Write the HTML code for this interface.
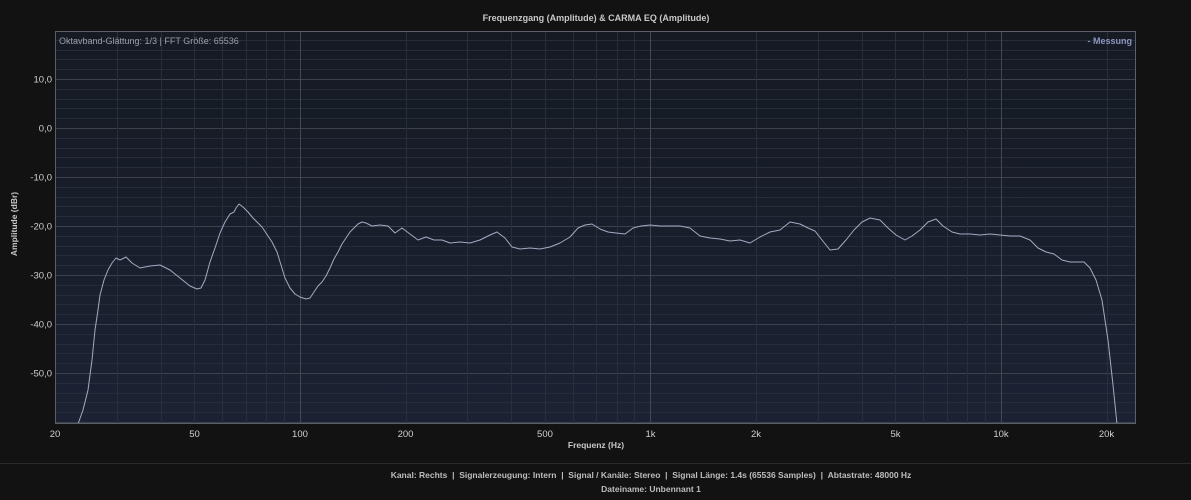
<!DOCTYPE html>
<html><head><meta charset="utf-8"><style>
html,body{margin:0;padding:0;background:#121212;width:1191px;height:500px;overflow:hidden;font-family:"Liberation Sans",sans-serif}
svg{display:block}
</style></head><body>
<svg id="s" width="1191" height="500" xmlns="http://www.w3.org/2000/svg">
<defs><linearGradient id="bg" x1="0" y1="0" x2="0" y2="1"><stop offset="0" stop-color="#151a23"/><stop offset="1" stop-color="#1c2233"/></linearGradient></defs>
<rect width="1191" height="500" fill="#121212"/>
<text x="596" y="21" fill="#c8c8c8" font-size="9" font-weight="bold" text-anchor="middle">Frequenzgang (Amplitude) &amp; CARMA EQ (Amplitude)</text>
<rect x="55" y="31" width="1081" height="393" fill="url(#bg)"/>
<g id="grid"></g>
<polyline fill="none" stroke="#a2abc2" stroke-width="1" stroke-linejoin="round" points="78,424 83,410 88,390 92,360 95,330 98,310 100,295 104,280 108,270 112,263 116,258 120,260 126,257 132,263 140,268 150,266 160,265 170,270 180,278 190,286 197,289 201,288 205,280 210,262 215,248 220,233 225,222 230,214 234,212 236,208 239,204 243,207 248,212 253,218 258,223 262,227 266,233 272,242 277,252 281,265 285,278 290,288 295,294 300,297 306,299 310,298 314,292 318,286 322,282 326,276 330,268 334,259 338,252 342,244 346,238 350,232 354,228 358,224 362,222 366,223 372,226 380,225 388,226 395,233 402,228 410,234 418,240 426,237 434,240 442,240 450,243 460,242 470,243 480,240 490,235 497,232 505,238 512,247 520,249 530,248 540,249 550,247 560,243 570,237 578,228 585,225 592,224 600,229 608,232 616,233 625,234 633,228 641,226 650,225 660,226 670,226 680,226 690,228 700,236 710,238 720,239 730,241 740,240 750,243 760,237 770,232 780,230 790,222 800,224 808,228 815,231 822,240 830,250 838,249 846,240 854,230 862,222 870,218 880,220 888,228 896,235 905,240 912,236 920,230 928,222 936,219 943,226 952,232 960,234 970,234 980,235 990,234 1000,235 1010,236 1020,236 1030,240 1038,248 1046,252 1054,254 1062,260 1070,262 1076,262 1084,262 1090,268 1096,280 1102,300 1108,340 1113,385 1117,424"/>
<rect x="55.5" y="31.5" width="1080" height="392" fill="none" stroke="#5a5f68" stroke-width="1"/>
<text x="59" y="44" fill="#9aa0aa" font-size="9">Oktavband-Glättung: 1/3 | FFT Größe: 65536</text>
<text x="1132" y="44" fill="#8b95bd" font-size="9" font-weight="bold" text-anchor="end">- Messung</text>
<g fill="#cfcfcf" font-size="9.5" text-anchor="end" id="ylab"></g>
<g fill="#cfcfcf" font-size="9.5" text-anchor="middle" id="xlab"></g>
<text transform="translate(17,224) rotate(-90)" fill="#c8c8c8" font-size="8.5" font-weight="bold" text-anchor="middle">Amplitude (dBr)</text>
<text x="596" y="448" fill="#c8c8c8" font-size="8.5" font-weight="bold" text-anchor="middle">Frequenz (Hz)</text>
<line x1="0" y1="463.5" x2="1191" y2="463.5" stroke="#2a2a2a"/>
<text x="651" y="478" fill="#bdbdbd" font-size="8.5" font-weight="bold" text-anchor="middle">Kanal: Rechts &#160;| &#160;Signalerzeugung: Intern &#160;| &#160;Signal / Kanäle: Stereo &#160;| &#160;Signal Länge: 1.4s (65536 Samples) &#160;| &#160;Abtastrate: 48000 Hz</text>
<text x="651" y="492" fill="#bdbdbd" font-size="8.5" font-weight="bold" text-anchor="middle">Dateiname: Unbennant 1</text>
</svg>
<script>
var NS="http://www.w3.org/2000/svg",g=document.getElementById("grid");
function ln(x1,y1,x2,y2,c){var l=document.createElementNS(NS,"line");l.setAttribute("x1",x1);l.setAttribute("y1",y1);l.setAttribute("x2",x2);l.setAttribute("y2",y2);l.setAttribute("stroke",c);l.setAttribute("stroke-width","1");g.appendChild(l);}
function X(f){return 55+350.5*Math.log10(f/20);}
function Y(d){return 128-4.9*d;}
for(var d=18;d>=-60;d-=2){var y=Math.round(Y(d))+0.5;ln(56,y,1135,y,d%10==0?"#3c414c":"#262c3a");}
var dec=[10,100,1000,10000];
for(var i=0;i<dec.length;i++)for(var m=1;m<10;m++){var f=dec[i]*m;if(f<=20||f>24000)continue;var x=Math.round(X(f))+0.5;ln(x,32,x,423,m==1?"#434853":"#282e3c");}
var yl=document.getElementById("ylab");
[10,0,-10,-20,-30,-40,-50].forEach(function(d){var t=document.createElementNS(NS,"text");t.setAttribute("x",52);t.setAttribute("y",Y(d)+3.5);t.textContent=(d+",0");yl.appendChild(t);});
var xl=document.getElementById("xlab");
[[20,"20"],[50,"50"],[100,"100"],[200,"200"],[500,"500"],[1000,"1k"],[2000,"2k"],[5000,"5k"],[10000,"10k"],[20000,"20k"]].forEach(function(a){var t=document.createElementNS(NS,"text");t.setAttribute("x",X(a[0]));t.setAttribute("y",437);t.textContent=a[1];xl.appendChild(t);});
</script>
</body></html>
